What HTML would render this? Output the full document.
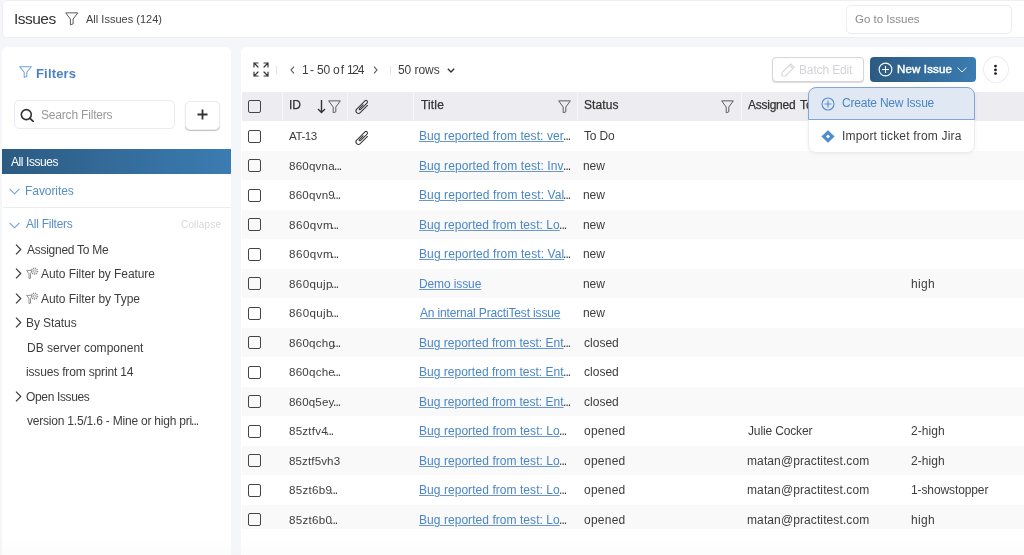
<!DOCTYPE html>
<html><head><meta charset="utf-8">
<style>
*{box-sizing:border-box;margin:0;padding:0}
html,body{width:1024px;height:555px;overflow:hidden}
body{background:#f5f6fa;font-family:"Liberation Sans",sans-serif;color:#333;position:relative;font-size:12px}
.abs{position:absolute}
.t{position:absolute;white-space:nowrap;line-height:1;will-change:transform}
#hdr{left:2px;top:0;width:1030px;height:38px;background:#fff;border:1px solid #efeff3;border-radius:5px}
#goto{left:846px;top:5px;width:166px;height:29px;border:1px solid #ececf1;border-radius:5px;background:#fff}
#left{left:2px;top:47px;width:229px;height:520px;background:#fff;border-radius:6px}
#main{left:241px;top:47px;width:800px;height:520px;background:#fff;border-radius:6px}
.search{left:14px;top:100px;width:161px;height:29px;border:1px solid #ebebf0;border-radius:5px}
.plus{left:185px;top:101px;width:35px;height:29px;border:1px solid #ebebf0;border-radius:5px;box-shadow:0 1px 1px rgba(0,0,0,.25);background:#fff}
.sel{left:2px;top:149px;width:229px;height:25px;background:linear-gradient(90deg,#2c5b82,#3b7cb2)}
.thead{left:242px;top:92px;width:782px;height:29px;background:#ececf1}
.vsep{position:absolute;top:92px;width:1px;height:29px;background:#f6f6f9}
.row{position:absolute;left:242px;width:782px}
.row.g{background:#f9f9fa}
.cb{position:absolute;left:248px;width:13px;height:13px;border:1.5px solid #444;border-radius:2px}
.lnk{color:#4a86c5;text-decoration:underline;text-underline-offset:2px}
.btn-batch{left:772px;top:57px;width:92px;height:25px;border:1px solid #d6d6da;border-radius:4px;box-shadow:0 1px 1px rgba(0,0,0,.15);background:#fff}
.btn-new{left:870px;top:57px;width:106px;height:25px;border-radius:4px;background:linear-gradient(90deg,#2c5b82,#3b7cb2)}
.kebab{left:983px;top:56px;width:26px;height:27px;border:1px solid #ececf1;border-radius:50%;background:#fff}
.dd{left:808px;top:87px;width:167px;height:66px;background:#fff;border-radius:8px;border:1px solid #ededf1;box-shadow:0 1px 4px rgba(0,0,0,.06)}
.dd-hi{left:808px;top:87px;width:167px;height:33px;background:#dfe8f3;border:1px solid #80a7d4;border-radius:8px 8px 0 0}
</style></head><body>

<div id="hdr" class="abs"></div>
<div class="t" style="left:14.40px;top:11.28px;font-size:15.5px;color:#333;letter-spacing:-0.520px;">Issues</div>
<svg class="abs" style="left:64.5px;top:12px" width="13.5" height="13.5" viewBox="0 0 14 14" preserveAspectRatio="none"><path d="M0.7 0.9 H13.3 L8.4 7.3 V12.3 L5.6 13.3 V7.3 Z" fill="none" stroke="#555" stroke-width="1.0" stroke-linejoin="round"/></svg>
<div class="t" style="left:86.25px;top:14.09px;font-size:11px;color:#444;letter-spacing:0.010px;">All Issues (124)</div>
<div id="goto" class="abs"></div>
<div class="t" style="left:854.50px;top:13.82px;font-size:11.5px;color:#8a8a8a;letter-spacing:0.000px;">Go to Issues</div>
<div id="left" class="abs"></div>
<svg class="abs" style="left:19px;top:66px" width="13" height="12" viewBox="0 0 14 14" preserveAspectRatio="none"><path d="M0.7 0.9 H13.3 L8.4 7.3 V12.3 L5.6 13.3 V7.3 Z" fill="none" stroke="#6fa0d8" stroke-width="1.1" stroke-linejoin="round"/></svg>
<div class="t" style="left:35.50px;top:67.00px;font-size:13px;color:#4a82c4;font-weight:bold;letter-spacing:0.167px;">Filters</div>
<div class="search abs"></div>
<svg class="abs" style="left:20px;top:108px" width="14" height="14" viewBox="0 0 14 14"><circle cx="6.3" cy="6.6" r="5" fill="none" stroke="#333" stroke-width="1.6"/><path d="M10 10.3 L13.2 13.4" stroke="#333" stroke-width="1.7" stroke-linecap="round"/></svg>
<div class="t" style="left:40.50px;top:109.44px;font-size:12px;color:#999;letter-spacing:-0.185px;">Search Filters</div>
<div class="plus abs"></div>
<svg class="abs" style="left:197px;top:109px" width="11" height="11" viewBox="0 0 11 11"><path d="M5.5 0.5 V10.5 M0.5 5.5 H10.5" stroke="#333" stroke-width="1.8"/></svg>
<div class="sel abs"></div>
<div class="t" style="left:10.80px;top:155.94px;font-size:12px;color:#fff;letter-spacing:-0.422px;">All Issues</div>
<svg class="abs" style="left:9px;top:187.5px" width="11" height="7" viewBox="0 0 11 7" preserveAspectRatio="none"><path d="M0.6 0.8 L5.5 5.8 L10.4 0.8" fill="none" stroke="#6d9fd6" stroke-width="1.1"/></svg>
<div class="t" style="left:25.10px;top:184.84px;font-size:12px;color:#5a8ec8;letter-spacing:-0.062px;">Favorites</div>
<div class="abs" style="left:3px;top:207px;width:228px;height:1px;background:#ececf0"></div>
<svg class="abs" style="left:9px;top:221.5px" width="11" height="7" viewBox="0 0 11 7" preserveAspectRatio="none"><path d="M0.6 0.8 L5.5 5.8 L10.4 0.8" fill="none" stroke="#6d9fd6" stroke-width="1.1"/></svg>
<div class="t" style="left:26.00px;top:217.54px;font-size:12px;color:#5a8ec8;letter-spacing:-0.250px;">All Filters</div>
<div class="t" style="left:180.50px;top:219.84px;font-size:10px;color:#d8d8dc;letter-spacing:0.157px;">Collapse</div>
<svg class="abs" style="left:15px;top:243.8px" width="7" height="11" viewBox="0 0 7 11"><path d="M1 0.6 L5.8 5.5 L1 10.4" fill="none" stroke="#333" stroke-width="1.1"/></svg>
<div class="t" style="left:26.70px;top:243.74px;font-size:12px;color:#3d3d3d;letter-spacing:-0.262px;">Assigned To Me</div>
<svg class="abs" style="left:15px;top:268.3px" width="7" height="11" viewBox="0 0 7 11"><path d="M1 0.6 L5.8 5.5 L1 10.4" fill="none" stroke="#333" stroke-width="1.1"/></svg>
<svg class="abs" style="left:25.5px;top:266.9px" width="13" height="12" viewBox="0 0 13 12"><path d="M0.6 3.4 H6.4 L4.5 6.6 V11.2 L3 11.6 V6.6 Z" fill="#fff" stroke="#888" stroke-width="0.9" stroke-linejoin="round"/><circle cx="8.6" cy="4.2" r="2.9" fill="#fff" stroke="#888" stroke-width="1.5" stroke-dasharray="1.1 0.85"/><circle cx="8.6" cy="4.2" r="1.2" fill="none" stroke="#999" stroke-width="0.8"/></svg>
<div class="t" style="left:40.50px;top:268.24px;font-size:12px;color:#3d3d3d;letter-spacing:-0.067px;">Auto Filter by Feature</div>
<svg class="abs" style="left:15px;top:293.0px" width="7" height="11" viewBox="0 0 7 11"><path d="M1 0.6 L5.8 5.5 L1 10.4" fill="none" stroke="#333" stroke-width="1.1"/></svg>
<svg class="abs" style="left:25.5px;top:291.6px" width="13" height="12" viewBox="0 0 13 12"><path d="M0.6 3.4 H6.4 L4.5 6.6 V11.2 L3 11.6 V6.6 Z" fill="#fff" stroke="#888" stroke-width="0.9" stroke-linejoin="round"/><circle cx="8.6" cy="4.2" r="2.9" fill="#fff" stroke="#888" stroke-width="1.5" stroke-dasharray="1.1 0.85"/><circle cx="8.6" cy="4.2" r="1.2" fill="none" stroke="#999" stroke-width="0.8"/></svg>
<div class="t" style="left:40.50px;top:292.94px;font-size:12px;color:#3d3d3d;letter-spacing:-0.050px;">Auto Filter by Type</div>
<svg class="abs" style="left:15px;top:317.3px" width="7" height="11" viewBox="0 0 7 11"><path d="M1 0.6 L5.8 5.5 L1 10.4" fill="none" stroke="#333" stroke-width="1.1"/></svg>
<div class="t" style="left:25.70px;top:317.24px;font-size:12px;color:#3d3d3d;letter-spacing:-0.088px;">By Status</div>
<div class="t" style="left:26.50px;top:341.84px;font-size:12px;color:#3d3d3d;letter-spacing:0.022px;">DB server component</div>
<div class="t" style="left:26.20px;top:366.14px;font-size:12px;color:#3d3d3d;letter-spacing:-0.165px;">issues from sprint 14</div>
<svg class="abs" style="left:15px;top:390.9px" width="7" height="11" viewBox="0 0 7 11"><path d="M1 0.6 L5.8 5.5 L1 10.4" fill="none" stroke="#333" stroke-width="1.1"/></svg>
<div class="t" style="left:26.30px;top:390.84px;font-size:12px;color:#3d3d3d;letter-spacing:-0.350px;">Open Issues</div>
<div class="t" style="left:27.00px;top:415.34px;font-size:12px;color:#3d3d3d;letter-spacing:-0.206px;">version 1.5/1.6 - Mine or high pri</div>
<div class="t" style="left:190.60px;top:414.94px;font-size:12px;letter-spacing:-0.95px;color:#3d3d3d">...</div>
<div id="main" class="abs"></div>
<svg class="abs" style="left:253px;top:62px" width="16" height="15" viewBox="0 0 16 15"><g fill="none" stroke="#333" stroke-width="1.2" stroke-linecap="round"><path d="M1 5 V1 H5 M1 1 L5 5"/><path d="M11 1 H15 V5 M15 1 L11 5"/><path d="M1 10 V14 H5 M1 14 L5 10"/><path d="M15 10 V14 H11 M15 14 L11 10"/></g></svg>
<div class="abs" style="left:276px;top:66px;width:1px;height:8px;background:#e4e4e8"></div>
<svg class="abs" style="left:289.5px;top:66px" width="5" height="8" viewBox="0 0 5 8"><path d="M4 0.6 L1 4 L4 7.4" fill="none" stroke="#555" stroke-width="1.1"/></svg>
<div class="t" style="left:302.10px;top:63.84px;font-size:12px;color:#3d3d3d;letter-spacing:0.000px;">1</div>
<div class="t" style="left:310.10px;top:63.84px;font-size:12px;color:#3d3d3d;letter-spacing:0.000px;">-</div>
<div class="t" style="left:317.20px;top:63.84px;font-size:12px;color:#3d3d3d;letter-spacing:-0.100px;">50</div>
<div class="t" style="left:333.30px;top:63.84px;font-size:12px;color:#3d3d3d;letter-spacing:1.200px;">of</div>
<div class="t" style="left:346.60px;top:63.84px;font-size:12px;color:#3d3d3d;letter-spacing:-1.300px;">124</div>
<svg class="abs" style="left:372.5px;top:66px" width="5" height="8" viewBox="0 0 5 8"><path d="M1 0.6 L4 4 L1 7.4" fill="none" stroke="#555" stroke-width="1.1"/></svg>
<div class="abs" style="left:390px;top:66px;width:1px;height:8px;background:#e4e4e8"></div>
<div class="t" style="left:398.10px;top:63.84px;font-size:12px;color:#3d3d3d;letter-spacing:-0.050px;">50 rows</div>
<svg class="abs" style="left:446.5px;top:67.5px" width="8" height="5" viewBox="0 0 8 5"><path d="M0.8 0.8 L4 4 L7.2 0.8" fill="none" stroke="#333" stroke-width="1.4"/></svg>
<div class="btn-batch abs"></div>
<svg class="abs" style="left:780.5px;top:62.5px" width="14" height="14" viewBox="0 0 14 14"><path d="M1 13 L1 9.6 L8.6 2 L12 5.4 L4.4 13 Z M8.6 2 L9.8 0.8 L13.2 4.2 L12 5.4" fill="none" stroke="#d9d9dd" stroke-width="1.1" stroke-linejoin="round"/></svg>
<div class="t" style="left:798.60px;top:64.04px;font-size:12px;color:#d4d4d8;letter-spacing:-0.144px;">Batch Edit</div>
<div class="btn-new abs"></div>
<svg class="abs" style="left:878px;top:62px" width="15" height="15" viewBox="0 0 15 15"><circle cx="7.5" cy="7.5" r="6.4" fill="none" stroke="#fff" stroke-width="1.1"/><path d="M7.5 4 V11 M4 7.5 H11" stroke="#fff" stroke-width="1.1"/></svg>
<div class="t" style="left:896.50px;top:63.87px;font-size:11.5px;color:#fff;letter-spacing:0.163px;-webkit-text-stroke:0.45px #fff;">New Issue</div>
<svg class="abs" style="left:957px;top:67px" width="10" height="6" viewBox="0 0 11 7" preserveAspectRatio="none"><path d="M0.6 0.8 L5.5 5.8 L10.4 0.8" fill="none" stroke="#fff" stroke-width="1.0"/></svg>
<div class="kebab abs"></div>
<svg class="abs" style="left:993px;top:63.5px" width="5" height="12" viewBox="0 0 5 12"><circle cx="2.5" cy="2.1" r="1.45" fill="#222"/><circle cx="2.5" cy="5.9" r="1.45" fill="#222"/><circle cx="2.5" cy="9.6" r="1.45" fill="#222"/></svg>
<div class="thead abs"></div>
<div class="vsep" style="left:282px"></div>
<div class="vsep" style="left:347px"></div>
<div class="vsep" style="left:413px"></div>
<div class="vsep" style="left:577px"></div>
<div class="vsep" style="left:741px"></div>
<div class="cb" style="top:100px"></div>
<div class="t" style="left:288.60px;top:98.94px;font-size:12px;color:#333;-webkit-text-stroke:0.25px #333;">ID</div>
<svg class="abs" style="left:317px;top:99px" width="9" height="15" viewBox="0 0 9 15"><path d="M4.5 1 V13.5 M1 10 L4.5 13.5 L8 10" fill="none" stroke="#333" stroke-width="1.4"/></svg>
<svg class="abs" style="left:328px;top:99.5px" width="13" height="13.5" viewBox="0 0 14 14" preserveAspectRatio="none"><path d="M0.7 0.9 H13.3 L8.4 7.3 V12.3 L5.6 13.3 V7.3 Z" fill="none" stroke="#555" stroke-width="1.0" stroke-linejoin="round"/></svg>
<svg class="abs" style="left:352.7px;top:97.5px" width="19" height="19" viewBox="0 0 19 19"><path d="M14.48 7.46 L7.27 14.67 A2.5 2.5 0 0 1 3.73 11.13 L11.93 2.93 A1.5 1.5 0 0 1 14.06 5.05 L7.41 11.70 A0.75 0.75 0 0 1 6.35 10.64 L10.10 6.89" fill="none" stroke="#3a3a3a" stroke-width="1.05" stroke-linecap="round"/></svg>
<div class="t" style="left:420.60px;top:98.94px;font-size:12px;color:#333;letter-spacing:0.150px;-webkit-text-stroke:0.25px #333;">Title</div>
<svg class="abs" style="left:557.5px;top:99.5px" width="13" height="13.5" viewBox="0 0 14 14" preserveAspectRatio="none"><path d="M0.7 0.9 H13.3 L8.4 7.3 V12.3 L5.6 13.3 V7.3 Z" fill="none" stroke="#555" stroke-width="1.0" stroke-linejoin="round"/></svg>
<div class="t" style="left:583.90px;top:98.94px;font-size:12px;color:#333;letter-spacing:0.120px;-webkit-text-stroke:0.25px #333;">Status</div>
<svg class="abs" style="left:721px;top:99.5px" width="13" height="13.5" viewBox="0 0 14 14" preserveAspectRatio="none"><path d="M0.7 0.9 H13.3 L8.4 7.3 V12.3 L5.6 13.3 V7.3 Z" fill="none" stroke="#555" stroke-width="1.0" stroke-linejoin="round"/></svg>
<div class="t" style="left:748.20px;top:98.94px;font-size:12px;color:#333;letter-spacing:-0.257px;-webkit-text-stroke:0.25px #333;">Assigned</div>
<div class="t" style="left:799.50px;top:98.94px;font-size:12px;color:#333;-webkit-text-stroke:0.25px #333;">To</div>
<div class="row" style="top:121.0px;height:29.5px"></div>
<div class="cb" style="top:129.8px"></div>
<div class="t" style="left:289.20px;top:130.38px;font-size:11.6px;color:#3d3d3d;letter-spacing:-0.450px;">AT-13</div>
<svg class="abs" style="left:352.7px;top:128.5px" width="19" height="19" viewBox="0 0 19 19"><path d="M14.48 7.46 L7.27 14.67 A2.5 2.5 0 0 1 3.73 11.13 L11.93 2.93 A1.5 1.5 0 0 1 14.06 5.05 L7.41 11.70 A0.75 0.75 0 0 1 6.35 10.64 L10.10 6.89" fill="none" stroke="#3a3a3a" stroke-width="1.05" stroke-linecap="round"/></svg>
<div class="t" style="left:419.40px;top:130.04px;font-size:12px;color:#4a86c5;letter-spacing:0.077px;text-decoration:underline;text-underline-offset:1px;text-decoration-thickness:1px;text-decoration-color:#6a98cd;">Bug reported from test: ver</div>
<div class="t" style="left:562.80px;top:130.14px;font-size:12px;letter-spacing:-0.95px;color:#3d3d3d">...</div>
<div class="t" style="left:583.70px;top:130.04px;font-size:12px;color:#3d3d3d;letter-spacing:-0.150px;">To Do</div>
<div class="row g" style="top:150.5px;height:29.5px"></div>
<div class="cb" style="top:159.3px"></div>
<div class="t" style="left:288.70px;top:159.88px;font-size:11.6px;color:#3d3d3d;letter-spacing:0.200px;">860qvna</div>
<div class="t" style="left:333.80px;top:159.64px;font-size:12px;letter-spacing:-0.95px;color:#3d3d3d">...</div>
<div class="t" style="left:419.40px;top:159.54px;font-size:12px;color:#4a86c5;letter-spacing:0.092px;text-decoration:underline;text-underline-offset:1px;text-decoration-thickness:1px;text-decoration-color:#6a98cd;">Bug reported from test: Inv</div>
<div class="t" style="left:562.80px;top:159.64px;font-size:12px;letter-spacing:-0.95px;color:#3d3d3d">...</div>
<div class="t" style="left:583.20px;top:159.54px;font-size:12px;color:#3d3d3d;letter-spacing:-0.100px;">new</div>
<div class="row" style="top:180.0px;height:29.5px"></div>
<div class="cb" style="top:188.8px"></div>
<div class="t" style="left:288.70px;top:189.38px;font-size:11.6px;color:#3d3d3d;letter-spacing:0.217px;">860qvn9</div>
<div class="t" style="left:333.30px;top:189.14px;font-size:12px;letter-spacing:-0.95px;color:#3d3d3d">...</div>
<div class="t" style="left:419.40px;top:189.04px;font-size:12px;color:#4a86c5;letter-spacing:0.104px;text-decoration:underline;text-underline-offset:1px;text-decoration-thickness:1px;text-decoration-color:#6a98cd;">Bug reported from test: Val</div>
<div class="t" style="left:562.80px;top:189.14px;font-size:12px;letter-spacing:-0.95px;color:#3d3d3d">...</div>
<div class="t" style="left:583.20px;top:189.04px;font-size:12px;color:#3d3d3d;letter-spacing:-0.100px;">new</div>
<div class="row g" style="top:209.5px;height:29.5px"></div>
<div class="cb" style="top:218.3px"></div>
<div class="t" style="left:288.70px;top:218.88px;font-size:11.6px;color:#3d3d3d;letter-spacing:0.500px;">860qvm</div>
<div class="t" style="left:331.00px;top:218.64px;font-size:12px;letter-spacing:-0.95px;color:#3d3d3d">...</div>
<div class="t" style="left:419.40px;top:218.54px;font-size:12px;color:#4a86c5;letter-spacing:0.052px;text-decoration:underline;text-underline-offset:1px;text-decoration-thickness:1px;text-decoration-color:#6a98cd;">Bug reported from test: Lo</div>
<div class="t" style="left:558.50px;top:218.64px;font-size:12px;letter-spacing:-0.95px;color:#3d3d3d">...</div>
<div class="t" style="left:583.20px;top:218.54px;font-size:12px;color:#3d3d3d;letter-spacing:-0.100px;">new</div>
<div class="row" style="top:239.0px;height:29.5px"></div>
<div class="cb" style="top:247.8px"></div>
<div class="t" style="left:288.70px;top:248.38px;font-size:11.6px;color:#3d3d3d;letter-spacing:0.500px;">860qvm</div>
<div class="t" style="left:331.00px;top:248.14px;font-size:12px;letter-spacing:-0.95px;color:#3d3d3d">...</div>
<div class="t" style="left:419.40px;top:248.04px;font-size:12px;color:#4a86c5;letter-spacing:0.104px;text-decoration:underline;text-underline-offset:1px;text-decoration-thickness:1px;text-decoration-color:#6a98cd;">Bug reported from test: Val</div>
<div class="t" style="left:562.80px;top:248.14px;font-size:12px;letter-spacing:-0.95px;color:#3d3d3d">...</div>
<div class="t" style="left:583.20px;top:248.04px;font-size:12px;color:#3d3d3d;letter-spacing:-0.100px;">new</div>
<div class="row g" style="top:268.5px;height:29.5px"></div>
<div class="cb" style="top:277.3px"></div>
<div class="t" style="left:288.70px;top:277.88px;font-size:11.6px;color:#3d3d3d;letter-spacing:0.367px;">860qujp</div>
<div class="t" style="left:331.00px;top:277.64px;font-size:12px;letter-spacing:-0.95px;color:#3d3d3d">...</div>
<div class="t" style="left:419.40px;top:277.54px;font-size:12px;color:#4a86c5;letter-spacing:-0.111px;text-decoration:underline;text-underline-offset:1px;text-decoration-thickness:1px;text-decoration-color:#6a98cd;">Demo issue</div>
<div class="t" style="left:583.20px;top:277.54px;font-size:12px;color:#3d3d3d;letter-spacing:-0.100px;">new</div>
<div class="t" style="left:910.70px;top:277.54px;font-size:12px;color:#3d3d3d;letter-spacing:0.300px;">high</div>
<div class="row" style="top:298.0px;height:29.5px"></div>
<div class="cb" style="top:306.8px"></div>
<div class="t" style="left:288.70px;top:307.38px;font-size:11.6px;color:#3d3d3d;letter-spacing:0.367px;">860qujb</div>
<div class="t" style="left:331.00px;top:307.14px;font-size:12px;letter-spacing:-0.95px;color:#3d3d3d">...</div>
<div class="t" style="left:420.40px;top:307.04px;font-size:12px;color:#4a86c5;letter-spacing:-0.159px;text-decoration:underline;text-underline-offset:1px;text-decoration-thickness:1px;text-decoration-color:#6a98cd;">An internal PractiTest issue</div>
<div class="t" style="left:583.20px;top:307.04px;font-size:12px;color:#3d3d3d;letter-spacing:-0.100px;">new</div>
<div class="row g" style="top:327.5px;height:29.5px"></div>
<div class="cb" style="top:336.3px"></div>
<div class="t" style="left:288.70px;top:336.88px;font-size:11.6px;color:#3d3d3d;letter-spacing:0.250px;">860qchg</div>
<div class="t" style="left:333.30px;top:336.64px;font-size:12px;letter-spacing:-0.95px;color:#3d3d3d">...</div>
<div class="t" style="left:419.40px;top:336.54px;font-size:12px;color:#4a86c5;letter-spacing:0.019px;text-decoration:underline;text-underline-offset:1px;text-decoration-thickness:1px;text-decoration-color:#6a98cd;">Bug reported from test: Ent</div>
<div class="t" style="left:562.80px;top:336.64px;font-size:12px;letter-spacing:-0.95px;color:#3d3d3d">...</div>
<div class="t" style="left:583.50px;top:336.54px;font-size:12px;color:#3d3d3d;letter-spacing:0.020px;">closed</div>
<div class="row" style="top:357.0px;height:29.5px"></div>
<div class="cb" style="top:365.8px"></div>
<div class="t" style="left:288.70px;top:366.38px;font-size:11.6px;color:#3d3d3d;letter-spacing:0.217px;">860qche</div>
<div class="t" style="left:333.30px;top:366.14px;font-size:12px;letter-spacing:-0.95px;color:#3d3d3d">...</div>
<div class="t" style="left:419.40px;top:366.04px;font-size:12px;color:#4a86c5;letter-spacing:0.019px;text-decoration:underline;text-underline-offset:1px;text-decoration-thickness:1px;text-decoration-color:#6a98cd;">Bug reported from test: Ent</div>
<div class="t" style="left:562.80px;top:366.14px;font-size:12px;letter-spacing:-0.95px;color:#3d3d3d">...</div>
<div class="t" style="left:583.50px;top:366.04px;font-size:12px;color:#3d3d3d;letter-spacing:0.020px;">closed</div>
<div class="row g" style="top:386.5px;height:29.5px"></div>
<div class="cb" style="top:395.3px"></div>
<div class="t" style="left:288.70px;top:395.88px;font-size:11.6px;color:#3d3d3d;letter-spacing:0.133px;">860q5ey</div>
<div class="t" style="left:333.30px;top:395.64px;font-size:12px;letter-spacing:-0.95px;color:#3d3d3d">...</div>
<div class="t" style="left:419.40px;top:395.54px;font-size:12px;color:#4a86c5;letter-spacing:0.019px;text-decoration:underline;text-underline-offset:1px;text-decoration-thickness:1px;text-decoration-color:#6a98cd;">Bug reported from test: Ent</div>
<div class="t" style="left:562.80px;top:395.64px;font-size:12px;letter-spacing:-0.95px;color:#3d3d3d">...</div>
<div class="t" style="left:583.50px;top:395.54px;font-size:12px;color:#3d3d3d;letter-spacing:0.020px;">closed</div>
<div class="row" style="top:416.0px;height:29.5px"></div>
<div class="cb" style="top:424.8px"></div>
<div class="t" style="left:288.70px;top:425.38px;font-size:11.6px;color:#3d3d3d;letter-spacing:0.217px;">85ztfv4</div>
<div class="t" style="left:326.40px;top:425.14px;font-size:12px;letter-spacing:-0.95px;color:#3d3d3d">...</div>
<div class="t" style="left:419.40px;top:425.04px;font-size:12px;color:#4a86c5;letter-spacing:0.052px;text-decoration:underline;text-underline-offset:1px;text-decoration-thickness:1px;text-decoration-color:#6a98cd;">Bug reported from test: Lo</div>
<div class="t" style="left:558.50px;top:425.14px;font-size:12px;letter-spacing:-0.95px;color:#3d3d3d">...</div>
<div class="t" style="left:583.50px;top:425.04px;font-size:12px;color:#3d3d3d;letter-spacing:0.240px;">opened</div>
<div class="t" style="left:747.60px;top:425.04px;font-size:12px;color:#3d3d3d;letter-spacing:-0.145px;">Julie Cocker</div>
<div class="t" style="left:910.90px;top:425.04px;font-size:12px;color:#3d3d3d;letter-spacing:0.080px;">2-high</div>
<div class="row g" style="top:445.5px;height:29.5px"></div>
<div class="cb" style="top:454.3px"></div>
<div class="t" style="left:288.70px;top:454.88px;font-size:11.6px;color:#3d3d3d;letter-spacing:0.100px;">85ztf5vh3</div>
<div class="t" style="left:419.40px;top:454.54px;font-size:12px;color:#4a86c5;letter-spacing:0.052px;text-decoration:underline;text-underline-offset:1px;text-decoration-thickness:1px;text-decoration-color:#6a98cd;">Bug reported from test: Lo</div>
<div class="t" style="left:558.50px;top:454.64px;font-size:12px;letter-spacing:-0.95px;color:#3d3d3d">...</div>
<div class="t" style="left:583.50px;top:454.54px;font-size:12px;color:#3d3d3d;letter-spacing:0.240px;">opened</div>
<div class="t" style="left:747.00px;top:454.54px;font-size:12px;color:#3d3d3d;letter-spacing:0.105px;">matan@practitest.com</div>
<div class="t" style="left:910.90px;top:454.54px;font-size:12px;color:#3d3d3d;letter-spacing:0.080px;">2-high</div>
<div class="row" style="top:475.0px;height:29.5px"></div>
<div class="cb" style="top:483.8px"></div>
<div class="t" style="left:288.70px;top:484.38px;font-size:11.6px;color:#3d3d3d;letter-spacing:0.283px;">85zt6b9</div>
<div class="t" style="left:330.40px;top:484.14px;font-size:12px;letter-spacing:-0.95px;color:#3d3d3d">...</div>
<div class="t" style="left:419.40px;top:484.04px;font-size:12px;color:#4a86c5;letter-spacing:0.052px;text-decoration:underline;text-underline-offset:1px;text-decoration-thickness:1px;text-decoration-color:#6a98cd;">Bug reported from test: Lo</div>
<div class="t" style="left:558.50px;top:484.14px;font-size:12px;letter-spacing:-0.95px;color:#3d3d3d">...</div>
<div class="t" style="left:583.50px;top:484.04px;font-size:12px;color:#3d3d3d;letter-spacing:0.240px;">opened</div>
<div class="t" style="left:747.00px;top:484.04px;font-size:12px;color:#3d3d3d;letter-spacing:0.105px;">matan@practitest.com</div>
<div class="t" style="left:910.60px;top:484.04px;font-size:12px;color:#3d3d3d;letter-spacing:-0.108px;">1-showstopper</div>
<div class="row g" style="top:504.5px;height:24.6px"></div>
<div class="cb" style="top:513.3px"></div>
<div class="t" style="left:288.70px;top:513.88px;font-size:11.6px;color:#3d3d3d;letter-spacing:0.267px;">85zt6b0</div>
<div class="t" style="left:330.40px;top:513.64px;font-size:12px;letter-spacing:-0.95px;color:#3d3d3d">...</div>
<div class="t" style="left:419.40px;top:513.54px;font-size:12px;color:#4a86c5;letter-spacing:0.052px;text-decoration:underline;text-underline-offset:1px;text-decoration-thickness:1px;text-decoration-color:#6a98cd;">Bug reported from test: Lo</div>
<div class="t" style="left:558.50px;top:513.64px;font-size:12px;letter-spacing:-0.95px;color:#3d3d3d">...</div>
<div class="t" style="left:583.50px;top:513.54px;font-size:12px;color:#3d3d3d;letter-spacing:0.240px;">opened</div>
<div class="t" style="left:747.00px;top:513.54px;font-size:12px;color:#3d3d3d;letter-spacing:0.105px;">matan@practitest.com</div>
<div class="t" style="left:910.70px;top:513.54px;font-size:12px;color:#3d3d3d;letter-spacing:0.300px;">high</div>
<div class="dd abs"></div>
<div class="dd-hi abs"></div>
<svg class="abs" style="left:821px;top:96.5px" width="14" height="14" viewBox="0 0 14 14"><circle cx="7" cy="7" r="6" fill="none" stroke="#5a8ec8" stroke-width="1.1"/><path d="M7 3.6 V10.4 M3.6 7 H10.4" stroke="#5a8ec8" stroke-width="1.1"/></svg>
<div class="t" style="left:842.10px;top:97.14px;font-size:12px;color:#4a86c5;letter-spacing:-0.207px;">Create New Issue</div>
<svg class="abs" style="left:821px;top:129.5px" width="14" height="13" viewBox="0 0 14 13"><path d="M7 0.3 L13.6 6.5 L7 12.7 L0.4 6.5 Z" fill="#4f8bd0"/><path d="M7 4.6 L9 6.5 L7 8.4 L5 6.5 Z" fill="#fff"/></svg>
<div class="t" style="left:842.10px;top:129.84px;font-size:12px;color:#3d3d3d;letter-spacing:0.182px;">Import ticket from Jira</div>
<div class="abs" style="left:0;top:538px;width:1024px;height:17px;background:linear-gradient(180deg,rgba(240,240,245,0),rgba(240,240,245,.2))"></div>
</body></html>
